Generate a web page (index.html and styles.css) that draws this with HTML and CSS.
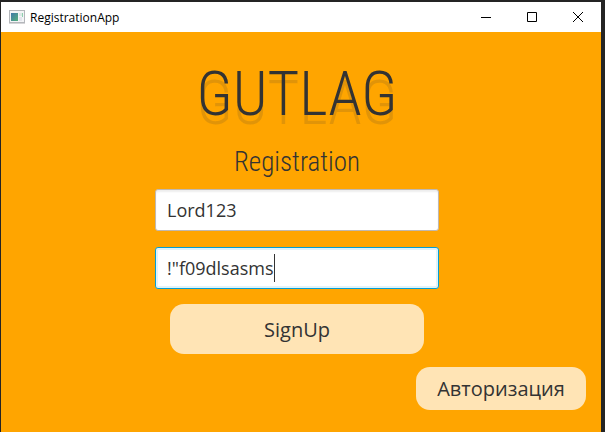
FILE: index.html
```html
<!DOCTYPE html>
<html lang="en">
<head>
<meta charset="utf-8">
<title>RegistrationApp</title>
<link rel="stylesheet" href="styles.css">
</head>
<body>
<div class="window">
  <header class="titlebar">
    <svg class="app-icon" width="16" height="14" viewBox="0 0 16 14" aria-hidden="true">
      <defs><linearGradient id="pane" x1="0" y1="0" x2="1" y2="1"><stop offset="0" stop-color="#3f78a8"/><stop offset="1" stop-color="#56b07c"/></linearGradient></defs>
      <rect x="0.5" y="0.5" width="15" height="12" fill="#f3f4f6" stroke="#b4b7bb"/>
      <path d="M0 13.500H16" stroke="#d5d5d8"/>
      <rect x="2" y="3" width="7" height="8" fill="url(#pane)"/>
      <rect x="10" y="3" width="4" height="3" fill="#dce9e6"/>
      <rect x="10" y="7" width="3" height="4" fill="#e3e5ec"/>
      <path d="M13.500 3v4" stroke="#8fcfae"/>
    </svg>
    <span class="caption">RegistrationApp</span>
    <div class="controls">
      <button type="button" class="control" aria-label="Minimize"><svg width="10" height="10" viewBox="0 0 10 10"><path d="M0 5.500H10"/></svg></button>
      <button type="button" class="control" aria-label="Maximize"><svg width="10" height="10" viewBox="0 0 10 10"><path d="M.5.5h9v9h-9z"/></svg></button>
      <button type="button" class="control" aria-label="Close"><svg width="10" height="10" viewBox="0 0 10 10"><path d="M0 0l10 10M10 0L0 10"/></svg></button>
    </div>
  </header>
  <main class="content">
    <h1 class="brand">GUTLAG</h1>
    <h2 class="heading">Registration</h2>
    <form class="form">
      <input class="field" type="text" aria-label="Login" value="Lord123">
      <div class="field field-active">
        <input class="field-input" type="text" aria-label="Password" value="!&quot;f09dlsasms">
      </div>
      <button type="button" class="button signup">SignUp</button>
    </form>
    <button type="button" class="button login">Авторизация</button>
  </main>
</div>
</body>
</html>
```
FILE: styles.css
```css
* {
  box-sizing: border-box;
}

body {
  margin: 0;
  min-height: 100vh;
  display: flex;
  padding: 2px 4px 0 1px;
  background: #242424;
  color: #333;
  font-family: "Open Sans", "Noto Sans", sans-serif;
}

.window {
  flex: 1;
  display: flex;
  flex-direction: column;
  background: #ffa500;
}

.titlebar {
  display: flex;
  align-items: center;
  height: 30px;
  padding-left: 8px;
  background: #fff;
  color: #000;
}

.caption {
  margin-left: 5px;
  font-size: 12px;
}

.controls {
  display: flex;
  align-self: stretch;
  margin-left: auto;
}

.control {
  display: flex;
  align-items: center;
  justify-content: center;
  width: 46px;
  padding: 0;
  border: 0;
  background: none;
}

.control path {
  fill: none;
  stroke: #000;
}

.content {
  flex: 1;
  display: flex;
  flex-direction: column;
  align-items: center;
  padding: 24px 15px 22px 7px;
}

.brand {
  margin: 0;
  font: 300 61px/76px "Roboto Condensed", "Liberation Sans Narrow", Roboto, sans-serif;
  text-shadow: 0 9px 0 rgba(51, 51, 51, 0.15);
}

.heading {
  margin: 12px 0 9px;
  font: 300 27px/36px "Roboto Condensed", Roboto, sans-serif;
}

.form {
  display: flex;
  flex-direction: column;
  align-items: center;
}

.field {
  width: 284px;
  height: 42px;
  margin-bottom: 16px;
  padding: 0 11px;
  border: 1px solid #c0b8b0;
  border-radius: 3px;
  background: #fff;
  box-shadow: inset 0 2px 2px #eee;
  color: #333;
  font: 18px "Open Sans", sans-serif;
}

.field-active {
  display: flex;
  align-items: center;
  margin-bottom: 15px;
  border: 1px solid #039ed3;
  box-shadow: inset 0 0 0 2px #e1f3fa;
}

.field-input {
  field-sizing: content;
  padding: 0;
  height: 28px;
  border: 0;
  border-right: 1px solid #333;
  outline: 0;
  background: none;
  color: inherit;
  font: inherit;
}

.button {
  padding: 0;
  border: 0;
  border-radius: 14px;
  background: #ffe4b5;
  color: #333;
  font: 20px "Open Sans", "Noto Sans", sans-serif;
}

.signup {
  width: 254px;
  height: 50px;
}

.login {
  align-self: flex-end;
  width: 170px;
  height: 43px;
  margin-top: 13px;
}
```
